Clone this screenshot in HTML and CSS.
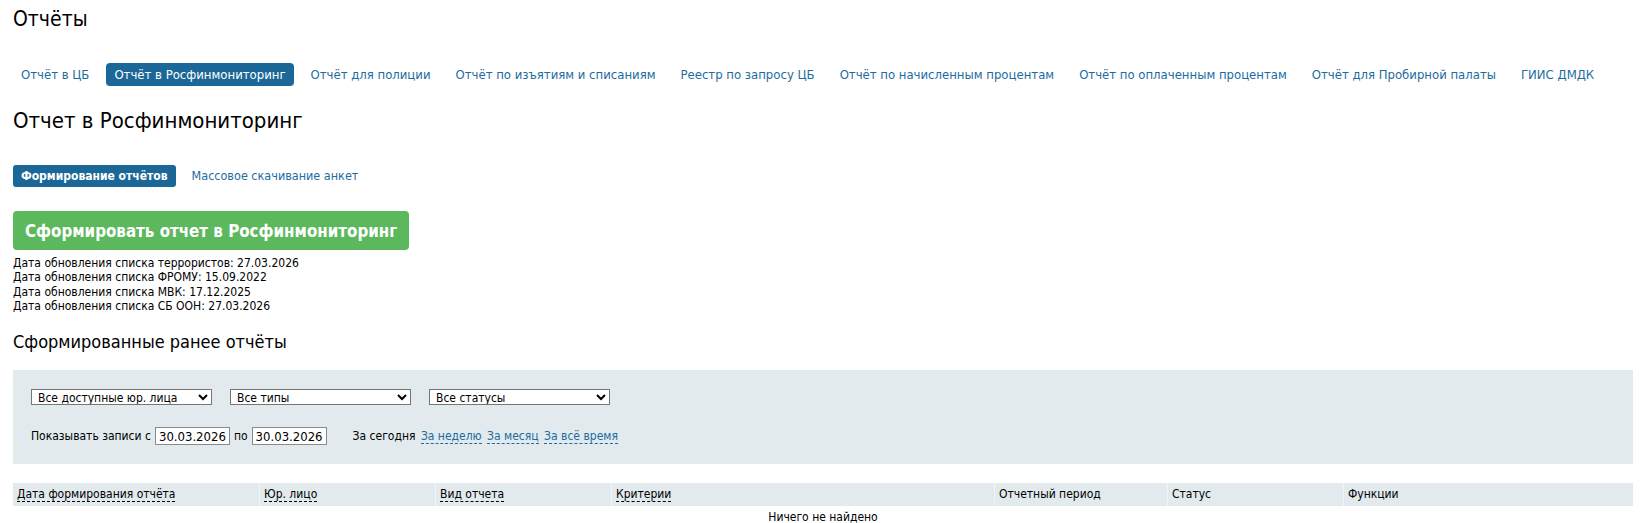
FILE: index.html
```
<!DOCTYPE html>
<html lang="ru">
<head>
    <meta charset="UTF-8">
    <title>Отчёты</title>
    <link rel="stylesheet" href="styles.css">
</head>
<body>
    <div class="page">
        <h1>Отчёты</h1>

        <ul class="tabs">
            <li><a href="#">Отчёт в ЦБ</a></li>
            <li class="active"><a href="#">Отчёт в Росфинмониторинг</a></li>
            <li><a href="#">Отчёт для полиции</a></li>
            <li><a href="#">Отчёт по изъятиям и списаниям</a></li>
            <li><a href="#">Реестр по запросу ЦБ</a></li>
            <li><a href="#">Отчёт по начисленным процентам</a></li>
            <li><a href="#">Отчёт по оплаченным процентам</a></li>
            <li><a href="#">Отчёт для Пробирной палаты</a></li>
            <li><a href="#">ГИИС ДМДК</a></li>
        </ul>

        <h2>Отчет в Росфинмониторинг</h2>

        <ul class="subtabs">
            <li class="active"><a href="#">Формирование отчётов</a></li>
            <li><a href="#">Массовое скачивание анкет</a></li>
        </ul>

        <button class="btn-create">Сформировать отчет в Росфинмониторинг</button>

        <div class="updates">
            <div>Дата обновления списка террористов: 27.03.2026</div>
            <div>Дата обновления списка ФРОМУ: 15.09.2022</div>
            <div>Дата обновления списка МВК: 17.12.2025</div>
            <div>Дата обновления списка СБ ООН: 27.03.2026</div>
        </div>

        <h3>Сформированные ранее отчёты</h3>

        <div class="filter">
            <div class="filter-row">
                <select>
                    <option>Все доступные юр. лица</option>
                </select>
                <select>
                    <option>Все типы</option>
                </select>
                <select>
                    <option>Все статусы</option>
                </select>
            </div>
            <div class="filter-row period">
                <span>Показывать записи с</span>
                <input type="text" value="30.03.2026">
                <span>по</span>
                <input type="text" value="30.03.2026">
                <span class="quick">
                    <span class="current">За сегодня</span>
                    <a href="#">За неделю</a>
                    <a href="#">За месяц</a>
                    <a href="#">За всё время</a>
                </span>
            </div>
        </div>

        <table class="reports">
            <thead>
                <tr>
                    <th class="c-date"><span class="sort">Дата формирования отчёта</span></th>
                    <th class="c-org"><span class="sort">Юр. лицо</span></th>
                    <th class="c-type"><span class="sort">Вид отчета</span></th>
                    <th class="c-crit"><span class="sort">Критерии</span></th>
                    <th class="c-period">Отчетный период</th>
                    <th class="c-status">Статус</th>
                    <th>Функции</th>
                </tr>
            </thead>
            <tbody>
                <tr>
                    <td colspan="7" class="empty">Ничего не найдено</td>
                </tr>
            </tbody>
        </table>
    </div>
</body>
</html>
```
FILE: styles.css
```
:root {
    --link-color: #1d6c9e;
    --tab-active: #1b6898;
    --panel-bg: #e2eaee;
    --text-color: #000;
}
body {
    margin: 0;
    font-family: 'DejaVu Sans Condensed', 'DejaVu Sans', sans-serif;
    font-size: 12px;
    color: var(--text-color);
    background: #fff;
}
.page {
    padding: 0 13px;
}
h1 {
    font-size: 21px;
    font-weight: normal;
    line-height: 24px;
    margin: 7px 0 0;
}
.tabs, .subtabs {
    list-style: none;
    margin: 0;
    padding: 0;
    display: flex;
}
.tabs {
    margin-top: 32px;
}
.tabs li {
    margin-right: 9px;
}
.tabs a, .subtabs a {
    display: block;
    padding: 4px 8px;
    border-radius: 4px;
    color: var(--link-color);
    text-decoration: none;
    font-size: 13px;
    line-height: 15px;
}
.tabs .active a, .subtabs .active a {
    background: var(--tab-active);
    color: #fff;
}
h2 {
    font-size: 22px;
    font-weight: normal;
    line-height: 26px;
    margin: 22px 0 0;
}
.subtabs {
    margin-top: 31px;
}
.subtabs li {
    margin-right: 8px;
}
.subtabs a {
    padding: 3px 8px;
    border-radius: 3px;
    font-size: 12.5px;
    line-height: 16px;
}
.subtabs .active a {
    font-size: 12px;
    font-weight: bold;
}
.btn-create {
    display: block;
    margin-top: 24px;
    height: 39px;
    padding: 0 12px;
    border: none;
    border-radius: 4px;
    background: #5cb85c;
    color: #fff;
    font-family: inherit;
    font-size: 16.8px;
    font-weight: bold;
    cursor: pointer;
}
.updates {
    margin-top: 6px;
    line-height: 14.3px;
}
h3 {
    font-size: 18px;
    font-weight: normal;
    line-height: 22px;
    margin: 18px 0 0;
}
.filter {
    margin-top: 17px;
    background: var(--panel-bg);
    padding: 19px 18px 16px;
    height: 59px;
}
.filter-row {
    display: flex;
    align-items: center;
    gap: 18px;
}
.filter select {
    width: 181px;
    height: 16px;
    padding: 0 2px;
    font-family: inherit;
    font-size: 12px;
    border: 1px solid #767676;
    border-radius: 0;
    background: #fff;
}
.period {
    margin-top: 22px;
    gap: 4px;
}
.period input {
    width: 67px;
    height: 16px;
    padding: 0 3px;
    border: 1px solid #8a8a8a;
    font-family: inherit;
    font-size: 13px;
}
.quick {
    margin-left: 22px;
}
.quick a {
    color: var(--link-color);
    text-decoration: none;
    border-bottom: 1px dashed var(--link-color);
    margin-left: 2px;
}
.reports {
    margin-top: 19px;
    width: 100%;
    border-collapse: collapse;
}
.reports th {
    background: var(--panel-bg);
    border-right: 1px solid #f2f5f7;
    font-weight: normal;
    text-align: left;
    padding: 4px 4px;
    height: 15px;
    line-height: 15px;
}
.reports th:last-child {
    border-right: none;
}
.sort {
    border-bottom: 1px dashed #000;
}
.c-date { width: 238px; }
.c-org { width: 167px; }
.c-type { width: 167px; }
.c-crit { width: 374px; }
.c-period { width: 164px; }
.c-status { width: 167px; }
.empty {
    text-align: center;
    padding: 4px;
}
```
